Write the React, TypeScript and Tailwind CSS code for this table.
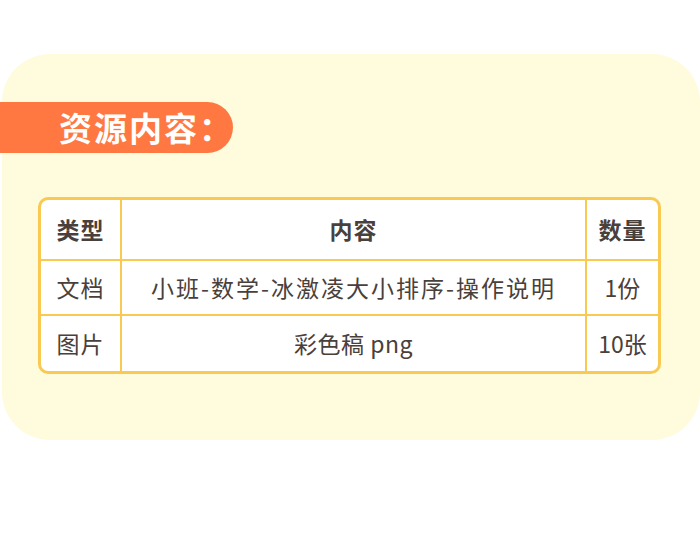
const font = { fontFamily: '"Noto Sans CJK SC", "Noto Sans", sans-serif' };

const rows = [
  { type: "文档", content: "小班-数学-冰激凌大小排序-操作说明", count: "1份", track: "tracking-[2px]" },
  { type: "图片", content: "彩色稿 png", count: "10张", track: "tracking-[0.5px]" },
];

export default function App() {
  return (
    <div className="w-[700px] h-[553px] bg-white pt-[54px] pl-[2px] overflow-hidden" style={font}>
      <div className="w-[698px] h-[386px] bg-[#FFFBDD] rounded-[48px] pt-[48px]">
        <div className="-ml-[2px] w-[233px] h-[51px] bg-[#FF7841] rounded-r-full flex items-center pl-[59px]">
          <span className="text-white text-[33px] font-bold leading-none tracking-[2px] whitespace-nowrap">资源内容：</span>
        </div>

        <div className="ml-[36px] mt-[44px] w-[623px] border-[3px] border-[#F9C952] rounded-[10px] overflow-hidden bg-white text-[#4A403B]">
          <div className="grid grid-cols-[81px_1fr_71px]">
            <div className="h-[61px] border-r-2 border-b-2 border-[#F9C952] flex items-center justify-center text-[23px] font-bold tracking-[1px]">类型</div>
            <div className="h-[61px] border-r-2 border-b-2 border-[#F9C952] flex items-center justify-center text-[23px] font-bold tracking-[1px]">内容</div>
            <div className="h-[61px] border-b-2 border-[#F9C952] flex items-center justify-center text-[23px] font-bold tracking-[1px]">数量</div>
            {rows.map((r, i) => {
              const last = i === rows.length - 1;
              const b = last ? "" : " border-b-2";
              return [
                <div key={r.type + "a"} className={"h-[55px] border-r-2 border-[#F9C952] flex items-center justify-center text-[23px] tracking-[1px]" + b}>{r.type}</div>,
                <div key={r.type + "b"} className={"h-[55px] border-r-2 border-[#F9C952] flex items-center justify-center text-[23px] " + r.track + b}>{r.content}</div>,
                <div key={r.type + "c"} className={"h-[55px] border-[#F9C952] flex items-center justify-center text-[23px]" + b}>{r.count}</div>,
              ];
            })}
          </div>
        </div>
      </div>
    </div>
  );
}
